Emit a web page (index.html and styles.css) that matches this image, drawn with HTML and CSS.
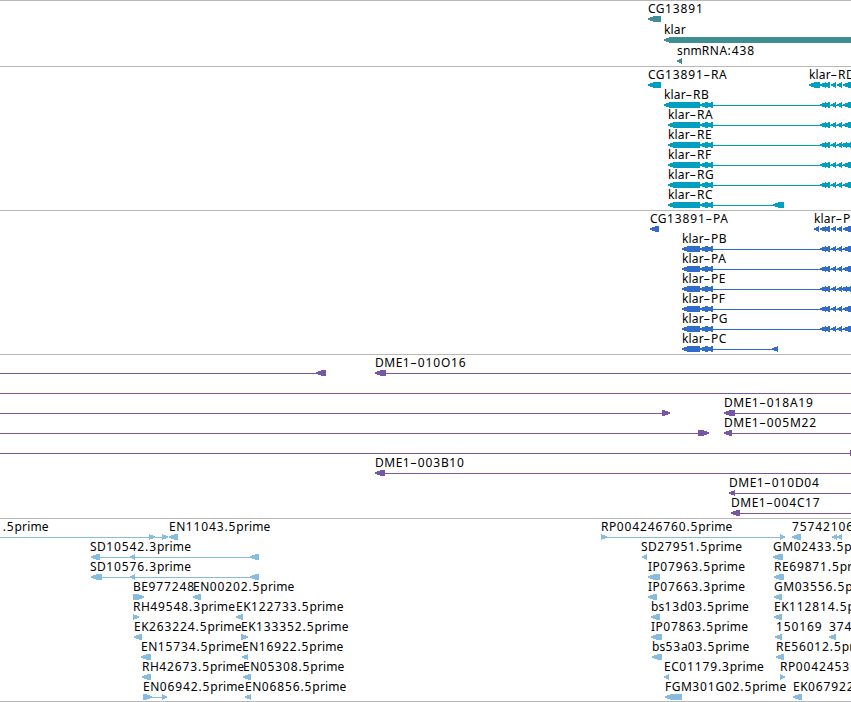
FILE: index.html
```html
<!DOCTYPE html>
<html lang="en">
<head>
  <meta charset="UTF-8" />
  <meta name="viewport" content="width=device-width, initial-scale=1.0" />
  <title>Genome tracks</title>
  <link rel="stylesheet" href="styles.css">
</head>
<body>
  <main class="tracks">
    <section class="track"><svg class="features genes" id="genes"></svg></section>
    <section class="track"><svg class="features transcripts" id="transcripts"></svg></section>
    <section class="track"><svg class="features proteins" id="proteins"></svg></section>
    <section class="track"><svg class="features clones" id="clones"></svg></section>
    <section class="track"><svg class="features ests" id="ests"></svg></section>
  </main>
  <script src="tracks.js"></script>
</body>
</html>
```
FILE: styles.css
```css
body {
  margin: 0;
  background-color: #fff;
  font-family: "Noto Sans", sans-serif;
  overflow: hidden;
}

.tracks {
  display: flex;
  flex-direction: column;
  border-bottom: 1px solid #b8b8b8;
}

.track {
  display: flex;
  border-top: 1px solid #b8b8b8;
}

.features {
  display: block;
  width: 100%;
  overflow: hidden;
}

.genes {
  height: 65px;
  color: #3f8e93;
}

.transcripts {
  height: 143px;
  color: #009fc1;
}

.proteins {
  height: 143px;
  color: #316ccb;
}

.clones {
  height: 163px;
  color: #7557a6;
}

.ests {
  height: 182px;
  color: #87bcde;
}

.intron,
.exon {
  fill: currentColor;
  shape-rendering: crispEdges;
}

.label {
  font-size: 12px;
  fill: #000;
}

.digits {
  letter-spacing: 0.88px;
}

.lower {
  letter-spacing: 0.15px;
}

.caps {
  letter-spacing: 0.5px;
}

.dash {
  letter-spacing: 1.2px;
}
```
FILE: tracks.js
```js
const SVG_NS = "http://www.w3.org/2000/svg";

// f = forward strand, r = reverse strand
// feature: [row, strand, label, labelX, line, exons]
const left = [[700, 708], [706, 713]];
const right = [[820, 826], [823, 830], [831, 836], [837, 842], [843, 856]];
const rightDense = [[820, 826], [823, 830], [831, 836], [837, 842], [841, 847], [845, 851], [849, 856]];

const tracks = {
  genes: {
    pitch: 21,
    features: [
      [0, "r", "CG13891", 648, null, [[648, 661]]],
      [1, "r", "klar", 664, null, [[664, 860]]],
      [2, "r", "snmRNA:438", 677, null, [[677, 682]]]
    ]
  },
  transcripts: {
    pitch: 20,
    features: [
      [0, "r", "CG13891-RA", 648, null, [[648, 661]]],
      [0, "r", "klar-RD", 809, null, [[809, 820], ...right]],
      [1, "r", "klar-RB", 664, [664, 851], [[664, 700], ...left, ...right]],
      [2, "r", "klar-RA", 668, [668, 851], [[668, 700], ...left, ...right]],
      [3, "r", "klar-RE", 668, [668, 851], [[668, 700], ...left, ...rightDense]],
      [4, "r", "klar-RF", 668, [668, 851], [[668, 700], ...left, ...right]],
      [5, "r", "klar-RG", 668, [668, 851], [[668, 700], ...left, ...right]],
      [6, "r", "klar-RC", 668, [668, 784], [[668, 700], ...left, [773, 784]]]
    ]
  },
  proteins: {
    pitch: 20,
    features: [
      [0, "r", "CG13891-PA", 650, null, [[650, 659]]],
      [0, "r", "klar-P", 814, null, [[814, 819], ...right]],
      [1, "r", "klar-PB", 682, [682, 851], [[682, 700], ...left, ...right]],
      [2, "r", "klar-PA", 682, [682, 851], [[682, 700], ...left, ...right]],
      [3, "r", "klar-PE", 682, [682, 851], [[682, 700], ...left, ...rightDense]],
      [4, "r", "klar-PF", 682, [682, 851], [[682, 700], ...left, ...right]],
      [5, "r", "klar-PG", 682, [682, 851], [[682, 700], ...left, ...right]],
      [6, "r", "klar-PC", 682, [682, 778], [[682, 700], ...left, [772, 778]]]
    ]
  },
  clones: {
    pitch: 20,
    features: [
      [0, "r", "", 0, [0, 326], [[316, 326]]],
      [0, "r", "DME1-010O16", 375, [375, 851], [[375, 386]]],
      [1, "r", "", 0, [0, 851], []],
      [2, "f", "", 0, [0, 670], [[662, 670]]],
      [2, "r", "DME1-018A19", 724, [724, 851], [[724, 735]]],
      [3, "f", "", 0, [0, 709], [[698, 709]]],
      [3, "r", "DME1-005M22", 724, [724, 851], [[724, 732]]],
      [4, "f", "", 0, [0, 851], [[850, 860]]],
      [5, "r", "DME1-003B10", 375, [375, 851], [[375, 385]]],
      [6, "r", "DME1-010D04", 729, [729, 851], [[729, 735]]],
      [7, "r", "DME1-004C17", 731, [731, 851], [[731, 740]]]
    ]
  },
  ests: {
    pitch: 20,
    features: [
      [0, "f", "1.5prime", -5, [0, 168], [[149, 155], [162, 168]]],
      [0, "r", "EN11043.5prime", 169, null, [[169, 178]]],
      [1, "r", "SD10542.3prime", 90, [91, 259], [[91, 100], [130, 135], [250, 259]]],
      [2, "r", "SD10576.3prime", 90, [91, 259], [[91, 102], [130, 135], [250, 259]]],
      [3, "f", "BE977248", 133, null, [[133, 144]]],
      [3, "r", "EN00202.5prime", 193, null, [[193, 201]]],
      [4, "f", "RH49548.3prime", 133, null, [[133, 139]]],
      [4, "r", "EK122733.5prime", 236, null, [[236, 243]]],
      [5, "r", "EK263224.5prime", 134, null, [[134, 142]]],
      [5, "f", "EK133352.5prime", 241, null, [[241, 248]]],
      [6, "r", "EN15734.5prime", 141, null, [[141, 151]]],
      [6, "r", "EN16922.5prime", 242, null, [[242, 248]]],
      [7, "r", "RH42673.5prime", 142, null, [[142, 151]]],
      [7, "r", "EN05308.5prime", 243, null, [[243, 251]]],
      [8, "f", "EN06942.5prime", 143, [143, 167], [[143, 152], [162, 167]]],
      [8, "r", "EN06856.5prime", 245, null, [[245, 251]]],

      [0, "f", "RP004246760.5prime", 601, [601, 785], [[601, 607], [780, 785]]],
      [1, "r", "SD27951.5prime", 641, null, [[642, 647]]],
      [2, "r", "IP07963.5prime", 648, null, [[648, 660]]],
      [3, "r", "IP07663.3prime", 648, null, [[648, 657]]],
      [4, "r", "bs13d03.5prime", 651, null, [[651, 660]]],
      [5, "r", "IP07863.5prime", 651, null, [[651, 662]]],
      [6, "r", "bs53a03.5prime", 652, null, [[652, 662]]],
      [7, "r", "EC01179.3prime", 664, null, [[664, 669]]],
      [8, "r", "FGM301G02.5prime", 665, null, [[665, 682]]],

      [0, "r", "75742106", 792, null, [[792, 801], [832, 837], [837, 842]]],
      [1, "r", "GM02433.5prime", 773, null, [[773, 783]]],
      [2, "r", "RE69871.5prime", 774, null, [[774, 784]]],
      [3, "r", "GM03556.5prime", 774, null, [[774, 782]]],
      [4, "r", "EK112814.5prime", 774, null, [[774, 782]]],
      [5, "r", "150169", 776, null, [[775, 782]]],
      [5, "r", "37406", 829, null, [[829, 836]]],
      [6, "r", "RE56012.5prime", 776, null, [[776, 784]]],
      [7, "f", "RP0042453", 780, null, [[780, 785]]],
      [8, "r", "EK067922.5prime", 793, null, [[793, 802]]]
    ]
  }
};

function add(parent, name, attrs) {
  const el = document.createElementNS(SVG_NS, name);
  for (const key in attrs) el.setAttribute(key, attrs[key]);
  parent.appendChild(el);
  return el;
}

// Exon box with a pointed end on the side of its strand
function exonPoints(start, end, y, strand) {
  const head = Math.min(6, end - start);
  const dir = strand === "r" ? 1 : -1;
  const tip = strand === "r" ? start : end;
  const tail = strand === "r" ? end : start;
  const neck = tip + head * dir;
  return `${tip},${y + 2.4} ${neck},${y} ${tail},${y} ${tail},${y + 6} ${neck},${y + 6} ${tip},${y + 3.6}`;
}

// Digits, capitals and hyphens are set wider than lower case
function drawLabel(svg, label, x, y) {
  const text = add(svg, "text", { class: "label", x: x, y: y });
  label.match(/[0-9.:]+|[A-Z]+|[a-z]+|-/g).forEach(part => {
    let cls = "lower";
    if (/[0-9.:]/.test(part)) cls = "digits";
    else if (/[A-Z]/.test(part)) cls = "caps";
    else if (part === "-") cls = "dash";
    add(text, "tspan", { class: cls }).textContent = part === "-" ? "–" : part;
  });
}

for (const id in tracks) {
  const svg = document.getElementById(id);
  const track = tracks[id];
  track.features.forEach(([row, strand, label, labelX, line, exons]) => {
    const y = row * track.pitch;
    if (line) {
      add(svg, "rect", { class: "intron", x: line[0], y: y + 18, width: line[1] - line[0], height: 1 });
    }
    exons.forEach(([start, end]) => {
      add(svg, "polygon", { class: "exon", points: exonPoints(start, end, y + 15, strand) });
    });
    if (label) drawLabel(svg, label, labelX, y + 12);
  });
}
```
